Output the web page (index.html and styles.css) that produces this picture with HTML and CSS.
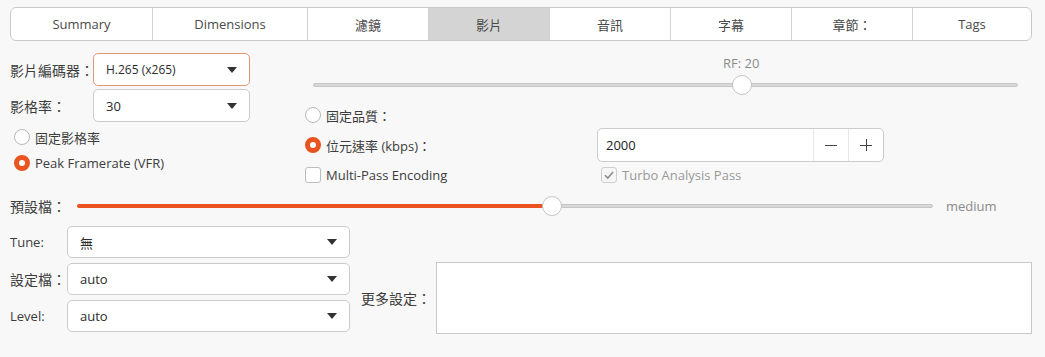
FILE: index.html
```html
<!DOCTYPE html>
<html lang="zh-Hant">
<head>
  <meta charset="UTF-8" />
  <title>影片</title>
  <link rel="stylesheet" href="styles.css">
</head>
<body>

  <div class="tabs">
    <div class="tab w142">Summary</div>
    <div class="tab w155">Dimensions</div>
    <div class="tab w121">濾鏡</div>
    <div class="tab w121 active">影片</div>
    <div class="tab w121">音訊</div>
    <div class="tab w121">字幕</div>
    <div class="tab w120">章節：</div>
    <div class="tab grow">Tags</div>
  </div>

  <div class="top">
    <div class="left-col">
      <div class="field-row">
        <span class="label w83">影片編碼器：</span>
        <div class="select focus small"><span>H.265 (x265)</span><i class="arrow"></i></div>
      </div>
      <div class="field-row">
        <span class="label w83">影格率：</span>
        <div class="select"><span>30</span><i class="arrow"></i></div>
      </div>
      <div class="option first">
        <span class="radio"></span>固定影格率
      </div>
      <div class="option">
        <span class="radio on"></span>Peak Framerate (VFR)
      </div>
    </div>

    <div class="right-col">
      <div class="rf">
        <div class="rf-label">RF: 20</div>
        <div class="slider rf-slider">
          <div class="track"></div>
          <div class="thumb" style="left: 60.85%"></div>
        </div>
      </div>
      <div class="quality">
        <div class="option"><span class="radio"></span>固定品質：</div>
        <div></div>
        <div class="option"><span class="radio on"></span>位元速率 (kbps)：</div>
        <div class="spin">
          <span class="spin-value">2000</span>
          <span class="spin-btn"><i class="minus"></i></span>
          <span class="spin-btn"><i class="minus"></i><i class="minus vert"></i></span>
        </div>
        <div class="option"><span class="check"></span>Multi-Pass Encoding</div>
        <div class="option disabled turbo"><span class="check checked">
          <svg width="12" height="12" viewBox="0 0 12 12"><path d="M2 6.2 L4.8 9 L10 3" fill="none" stroke="#8c8c8c" stroke-width="1.6"/></svg>
        </span>Turbo Analysis Pass</div>
      </div>
    </div>
  </div>

  <div class="preset">
    <span class="label">預設檔：</span>
    <div class="slider preset-slider">
      <div class="track"></div>
      <div class="fill" style="width: 55.5%"></div>
      <div class="thumb" style="left: 55.5%"></div>
    </div>
    <span class="preset-value">medium</span>
  </div>

  <div class="bottom">
    <div class="selects">
      <div class="field-row">
        <span class="label latin">Tune:</span>
        <div class="select"><span>無</span><i class="arrow"></i></div>
      </div>
      <div class="field-row">
        <span class="label">設定檔：</span>
        <div class="select"><span>auto</span><i class="arrow"></i></div>
      </div>
      <div class="field-row">
        <span class="label latin">Level:</span>
        <div class="select"><span>auto</span><i class="arrow"></i></div>
      </div>
    </div>
    <div class="more-row">
      <span class="label more">更多設定：</span>
      <div class="textarea"></div>
    </div>
  </div>

</body>
</html>
```

FILE: styles.css
```css
body {
  margin: 0;
  font-family: "Open Sans", "Noto Sans CJK TC", sans-serif;
  font-size: 13px;
  background: #f8f8f8;
  color: #3c3c3c;
}
.tabs {
  display: flex;
  margin: 7px 13px 0 10px;
  height: 32px;
  border: 1px solid #c9c9c9;
  border-radius: 6px;
  background: #fff;
  overflow: hidden;
}
.tab {
  display: flex;
  align-items: center;
  justify-content: center;
  border-left: 1px solid #d2d2d2;
  color: #4a4a4a;
  box-sizing: border-box;
}
.tab:first-child {
  border-left: none;
}
.tab.active {
  background: #d4d4d4;
}
.w142 { width: 141px; }
.w155 { width: 155px; }
.w121 { width: 121px; }
.w120 { width: 121px; }
.grow { flex: 1; }

.top {
  display: flex;
  margin-top: 12px;
}
.left-col {
  width: 305px;
  padding-left: 10px;
  box-sizing: border-box;
}
.field-row {
  display: flex;
  align-items: center;
}
.left-col .field-row {
  margin-bottom: 3px;
}
.label {
  font-size: 14px;
  color: #3c3c3c;
  white-space: nowrap;
}
.w83 { width: 83px; }
.select {
  width: 157px;
  height: 33px;
  box-sizing: border-box;
  background: #fff;
  border: 1px solid #cbcbcb;
  border-radius: 5px;
  display: flex;
  align-items: center;
  justify-content: space-between;
  padding: 0 12px;
  color: #2b2b2b;
  font-size: 13px;
}
.select.focus {
  border-color: #e39676;
}
.select.small span {
  font-size: 12px;
}
.arrow {
  width: 0;
  height: 0;
  border-left: 5px solid transparent;
  border-right: 5px solid transparent;
  border-top: 6px solid #333;
}
.option {
  display: flex;
  align-items: center;
  height: 20px;
  gap: 5px;
  font-size: 13px;
  color: #3c3c3c;
  white-space: nowrap;
}
.left-col .option {
  padding-left: 4px;
  margin-bottom: 6px;
}
.left-col .option.first {
  margin-top: 5px;
}
.radio {
  width: 16px;
  height: 16px;
  box-sizing: border-box;
  border: 1px solid #b8b8b8;
  border-radius: 50%;
  background: #fff;
  flex: none;
}
.radio.on {
  border: 5px solid #e95420;
}
.check {
  width: 16px;
  height: 16px;
  box-sizing: border-box;
  border: 1px solid #bcbcbc;
  border-radius: 3px;
  background: #fff;
  flex: none;
  display: flex;
  align-items: center;
  justify-content: center;
}
.disabled {
  color: #999;
}
.disabled .check {
  border-color: #cfcfcf;
  background: #f6f6f6;
}

.right-col {
  flex: 1;
}
.rf {
  height: 52px;
}
.rf-label {
  color: #8a8a8a;
  font-size: 13px;
  line-height: 16px;
  padding-top: 2px;
  margin-left: 418px;
}
.slider {
  position: relative;
  height: 20px;
}
.rf-slider {
  margin: 4px 27px 0 8px;
}
.track {
  position: absolute;
  left: 0;
  right: 0;
  top: 8px;
  height: 4px;
  background: #d8d8d8;
  border: 1px solid #c6c6c6;
  border-radius: 2px;
  box-sizing: border-box;
}
.fill {
  position: absolute;
  left: 0;
  top: 8px;
  height: 4px;
  background: #e95420;
  border-radius: 2px;
}
.thumb {
  position: absolute;
  top: 0;
  width: 20px;
  height: 20px;
  margin-left: -10px;
  box-sizing: border-box;
  border: 1px solid #c4c4c4;
  border-radius: 50%;
  background: #fff;
}
.quality {
  display: grid;
  grid-template-columns: 292px 287px;
  grid-template-rows: 20px 34px 20px;
  row-gap: 3px;
  align-items: center;
}
.turbo {
  padding-left: 4px;
}
.spin {
  height: 34px;
  box-sizing: border-box;
  background: #fff;
  border: 1px solid #cbcbcb;
  border-radius: 5px;
  display: flex;
  align-items: center;
}
.spin-value {
  flex: 1;
  padding-left: 8px;
  color: #222;
}
.spin-btn {
  width: 34px;
  height: 100%;
  border-left: 1px solid #e6e6e6;
  position: relative;
  display: flex;
  align-items: center;
  justify-content: center;
}
.minus {
  width: 12px;
  height: 1px;
  background: #444;
}
.minus.vert {
  position: absolute;
  width: 1px;
  height: 12px;
}

.preset {
  display: flex;
  align-items: center;
  margin: 11px 0 0 10px;
  height: 20px;
}
.preset .label {
  width: 67px;
}
.preset-slider {
  width: 856px;
}
.preset-value {
  margin-left: 13px;
  color: #8a8a8a;
  font-size: 13px;
}

.bottom {
  display: flex;
  margin: 10px 0 0 10px;
}
.selects {
  display: flex;
  flex-direction: column;
  gap: 5px;
  width: 340px;
}
.selects .label {
  width: 57px;
}
.selects .label.latin {
  font-size: 13px;
}
.selects .select {
  width: 283px;
  height: 32px;
}
.more-row {
  display: flex;
  align-items: center;
  margin-top: 36px;
  height: 72px;
}
.more {
  width: 75px;
  padding-left: 11px;
}
.textarea {
  width: 596px;
  height: 72px;
  background: #fff;
  border: 1px solid #c8c8c8;
  box-sizing: border-box;
}
```
